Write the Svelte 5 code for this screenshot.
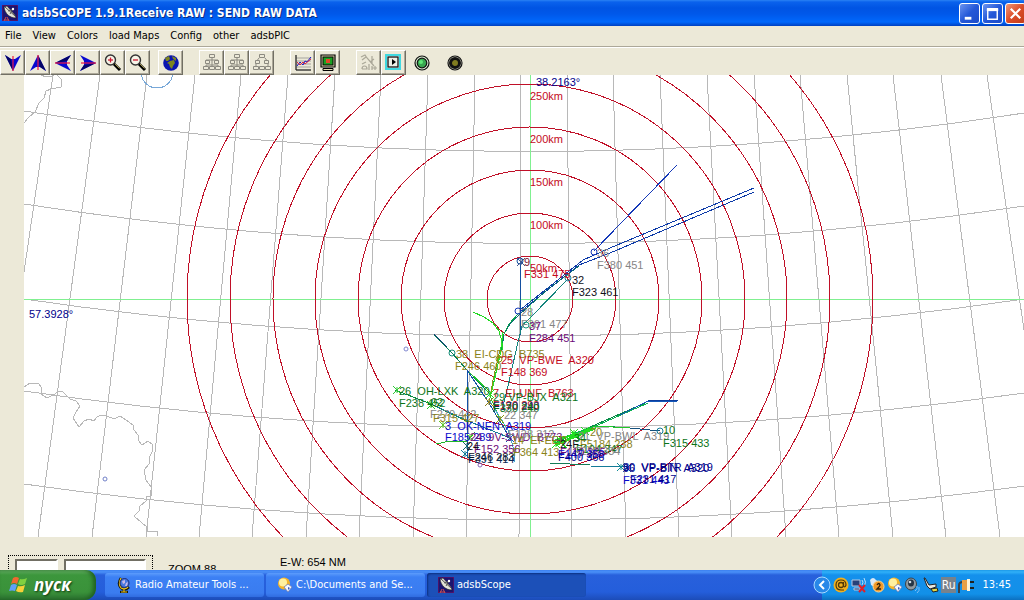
<script>
  const menus = ['File', 'View', 'Colors', 'load Maps', 'Config', 'other', 'adsbPIC'];

  const toolGroups = [
    ['south', 'north', 'west', 'east', 'zoom in', 'zoom out'],
    ['globe'],
    ['tree 1', 'tree 2', 'tree 3'],
    ['chart', 'monitor'],
    ['tools', 'run']
  ];

  const rings = [43, 86, 129, 172, 215, 257, 300, 343];

  // top and bottom x of every meridian
  const meridians = [
    [53, -15], [100, 38], [147, 92], [195, 146], [241, 199], [288, 252], [335, 306],
    [381, 359], [428, 413], [475, 466], [521, 519], [567, 572], [613, 626], [660, 679],
    [707, 732], [754, 786], [800, 839], [847, 893], [893, 946], [941, 1000], [987, 1054]
  ];

  // left y, control y and right y of every parallel
  const parallels = [
    [111, 191, 113], [204, 282, 206], [299, 373, 299], [391, 464, 393], [484, 555, 486]
  ];

  const navy = '#00008b', red = '#c40a1c', olive = '#8a8218', green = '#0c7418';
  const grey = '#858585', purple = '#6c0a78', blue = '#0808cc', black = '#101018', dark = '#0a2a58';

  const tracks = [
    ['#1438b8', '677,165 594,251'],
    ['#0c3aa8', '754,188 610,248 583,260 520,310'],
    ['#0c3aa8', '754,192 610,253 579,265 540,296 520,312'],
    ['#1450a0', '520,261 520,335'],
    ['#0a6a78', '579,266 548,289 520,314 510,324 504,334 502,348'],
    ['#14847c', '568,279 530,318 522,326 518,342 508,386 504,402'],
    ['#20d820', '473,312 484,317 493,323 499,331 502,342 502,350'],
    ['#08a04c', '519,313 509,324 503,336 501,351 497,368 490,398'],
    ['#28e028', '503,332 500,355 494,382 489,402'],
    ['#8c9410', '500,350 493,380 489,404'],
    ['#103c78', '434,334 452,353'],
    ['#088058', '434,335 452,353 467,370 490,394'],
    ['#20c828', '467,370 490,392'],
    ['#1450a8', '467,370 467,458'],
    ['#1450a8', '467,370 489,403 511,440'],
    ['#0c8c40', '395,390 431,404 468,422'],
    ['#147c98', '431,404 468,421 510,438'],
    ['#20b828', '436,444 450,441 467,441 475,432'],
    ['#20c828', '490,396 499,417 506,427'],
    ['#48a8c8', '489,400 508,430 514,450 514,462'],
    ['#088848', '555,443 597,424 645,403'],
    ['#08b050', '553,441 598,425 648,403'],
    ['#1458b8', '620,415 646,402 677,401'],
    ['#0c3c9c', '648,401 678,400'],
    ['#148c58', '599,426 630,428'],
    ['#14507c', '630,428 660,431'],
    ['#20c828', '556,444 595,426 630,428'],
    ['#147c58', '550,463 590,465'],
    ['#147c98', '590,466 625,467']
  ];

  const marks = [
    ['o', 520, 261, '#1450a0'], ['o', 518, 311, '#1438b8'], ['o', 594, 252, '#1438b8'],
    ['o', 568, 278, '#147c98'], ['o', 526, 325, '#14947c'], ['o', 452, 353, '#148c78'],
    ['o', 660, 431, '#147c98'], ['o', 499, 359, '#8c9410'],
    ['x', 397, 390, '#30c838'], ['x', 431, 405, '#20c828'], ['x', 443, 425, '#60c830'],
    ['x', 467, 446, '#14606c'], ['x', 490, 394, '#20e020'], ['x', 489, 402, '#8c7c18'],
    ['x', 556, 444, '#20e020'], ['x', 560, 440, '#20e020'], ['x', 574, 433, '#20e020'],
    ['x', 585, 431, '#20e020'], ['x', 621, 467, '#148c98'], ['x', 627, 468, '#1458b8'],
    ['x', 510, 438, '#1458b8'], ['x', 470, 437, '#60c830'], ['x', 521, 262, '#405890'],
    ['x', 500, 419, '#8c9410'], ['x', 465, 454, '#147c98']
  ];

  const labels = [
    [530, 100, red, '250km'], [530, 143, red, '200km'], [530, 186, red, '150km'],
    [530, 229, red, '100km'], [530, 272, red, '50km'],
    [536, 86, navy, '38.2163°'], [29, 318, navy, '57.3928°'],
    [524, 266, '#7a1030', '9'], [524, 278, red, 'F331 475'],
    [597, 257, grey, '36'], [597, 269, grey, 'F380 451'],
    [572, 284, black, '32'], [572, 296, black, 'F323 461'],
    [521, 316, grey, '28'], [521, 328, grey, 'F361 477'],
    [529, 330, purple, '37'], [529, 342, purple, 'F284 451'],
    [456, 358, olive, '38  EI-CDG  B735'], [455, 370, olive, 'F246 460'],
    [501, 364, red, '25  VP-BWE  A320'], [501, 376, red, 'F148 369'],
    [399, 395, green, '26  OH-LXK  A320'], [399, 407, green, 'F238 452'],
    [431, 406, green, '02'], [430, 418, grey, 'F270 442'], [433, 422, olive, 'F315 427'],
    [493, 397, red, '7  EI-UNF  B763'], [493, 401, green, '29 VP-BJX  A321'],
    [493, 409, red, 'F190 293'], [493, 410, dark, 'F170 240'], [493, 412, green, 'F330 240'],
    [504, 419, grey, '22 347'],
    [445, 430, blue, '3  OK-NEN  A319'], [445, 441, blue, 'F185 289'],
    [470, 441, purple, '24  9V-SWD  B773'], [474, 453, purple, 'F152 356'],
    [508, 438, grey, 'F138 312'], [512, 444, olive, '14  EI-EED'], [513, 456, olive, 'F364 413'],
    [467, 450, black, '24'], [468, 461, black, 'F246 283'], [468, 463, dark, 'F391 414'],
    [590, 436, olive, '20'], [578, 440, grey, '21  VP-BWL  A319'],
    [574, 442, green, '34'], [580, 448, olive, 'F5184 238'],
    [576, 453, green, 'F104 347'], [574, 455, grey, 'F217 334'],
    [560, 448, black, '24F'], [560, 456, purple, 'F110 365'],
    [558, 458, blue, 'F147 358'], [558, 461, navy, 'F400 366'],
    [663, 434, green, '10'], [663, 447, green, 'F315 433'],
    [623, 471, navy, '30  VP-BTR  A319'], [623, 472, navy, '96  VP-BIN  A320'],
    [623, 484, blue, 'F331 443'], [630, 483, navy, 'F231 417']
  ];

  const tasks = [
    { icon: 'globe', text: 'Radio Amateur Tools ...', active: false },
    { icon: 'user', text: 'C:\\Documents and Se...', active: false },
    { icon: 'dish', text: 'adsbScope', active: true }
  ];
</script>

{#snippet dish()}
  <svg class="i16" viewBox="0 0 16 16" aria-hidden="true">
    <rect width="16" height="16" fill="#1c1470" />
    <path d="M0 0H16V16H0Z" fill="none" stroke="#7a1060" />
    <path d="M2 2C3 9 8 13 14 13L13 10L5 1Z" fill="#e4e4d8" stroke="#222" stroke-width=".6" />
    <path d="M3 2L13 11M6 6L11 4M8 9L11 4" stroke="#555" fill="none" />
    <path d="M4 12L2 16M5 12L7 16M2 15H7" stroke="#c85050" fill="none" />
    <circle cx="11" cy="4" r="1.2" fill="#fff" />
  </svg>
{/snippet}

{#snippet userIcon()}
  <svg class="i16" viewBox="0 0 16 16" aria-hidden="true">
    <circle cx="7" cy="6.5" r="6" fill="#f5b428" />
    <circle cx="6" cy="5.5" r="4" fill="#fff0a0" />
    <path d="M7 10L11 7L15 10L11 15Z" fill="#f4f6ff" stroke="#7480b0" stroke-width=".8" />
    <path d="M11 10L13 11L11 13Z" fill="#3858b8" />
  </svg>
{/snippet}

{#snippet tool(name)}
  <svg class="i20" viewBox="0 0 20 20" aria-hidden="true">
    {#if name === 'south' || name === 'north' || name === 'west' || name === 'east'}
      <g transform="rotate({{ south: 0, west: 90, north: 180, east: 270 }[name]} 10 10)">
        <path d="M2 2L8 6H12L18 2L10 18Z" fill="#0808d0" />
        <path d="M2 2L8 6L10 18Z" fill="#040468" />
        <path d="M10 3V18" stroke="#f01840" stroke-width="1.2" />
      </g>
    {:else if name === 'zoom in' || name === 'zoom out'}
      <circle cx="7.500" cy="7" r="5" fill="#f6f4e8" stroke="#333" stroke-width="1.4" />
      <path d="M11 11L17 17" stroke="#000" stroke-width="3" />
      <path d="M12 11L16.500 15.500" stroke="#c8b860" stroke-width=".8" />
      <path d="M5 7H10" stroke="#d01830" stroke-width="1.3" />
      {#if name === 'zoom in'}<path d="M7.500 4.500V9.500" stroke="#d01830" stroke-width="1.3" />{/if}
    {:else if name === 'globe'}
      <circle cx="10" cy="10" r="7.800" fill="#0a14b0" />
      <path d="M4 5L8 3L9 6L7 8L5 8ZM9 8L13 7L14 10L12 13L11 16L9 14L8 11L6 10ZM11 3L15 5L15 8L12 6Z" fill="#7c8420" />
    {:else if name.startsWith('tree')}
      <g fill="#ece9d8" stroke="#8c8a80" stroke-width="1">
        {#if name === 'tree 3'}
          <path d="M7 5L4 9V15M13 5L16 9V15" fill="none" />
        {:else}
          <path d="M10 5V15M4 10V7H16V10M4 15V12H16V15" fill="none" />
        {/if}
        <path d="M7.500 1.500H12.500V4.500H7.500ZM3.500 7.500H7.500V10.500H3.500ZM12.500 7.500H16.500V10.500H12.500ZM1.500 13.500H6.500V16.500H1.500ZM13.500 13.500H18.500V16.500H13.500ZM7.500 13.500H12.500V16.500H7.500Z" />
      </g>
    {:else if name === 'chart'}
      <path d="M3 2V17H18M3 5H18M3 8H18M3 11H18M3 14H18" stroke="#888" stroke-width=".7" fill="none" />
      <path d="M3 2V17H18" stroke="#111" fill="none" />
      <path d="M4 13L7 9L10 12L12 8L14 9L18 4" stroke="#1818c0" stroke-width="1" fill="none" />
      <path d="M4 9L7 12L10 9L12 11L18 6" stroke="#d82048" stroke-width="1" fill="none" />
    {:else if name === 'monitor'}
      <path d="M3 2H17V14H3Z" fill="#d8d0a8" stroke="#000" stroke-width="1.2" />
      <rect x="5" y="4" width="10" height="8" fill="#18a020" stroke="#000" />
      <rect x="8" y="6" width="4" height="4" fill="#e04828" />
      <path d="M5 15.500H15V17.500H5Z" fill="#e0d8b0" stroke="#000" />
    {:else if name === 'tools'}
      <g stroke="#aaa798" fill="none" stroke-width="1.2">
        <path d="M2 4L6 2L8 5L15 13M3 7L7 4M13 3V10M11 9L15 6M3 11L7 9M3 16C3 12 8 12 8 16H3M10 17V11M13 17V13M16 17V13M13 15H18" />
      </g>
    {:else}
      <rect x="2" y="2" width="14" height="14" fill="#fff" stroke="#40d8e0" stroke-width="2" />
      <rect x="4" y="4" width="10" height="10" fill="#f0f0e8" stroke="#111" stroke-width="1.3" />
      <path d="M8 6L12 9L8 12Z" fill="#000" />
    {/if}
  </svg>
{/snippet}

<div class="screen">
  <header class="title">
    {@render dish()}
    <h1>adsbSCOPE 1.9.1Receive RAW : SEND RAW DATA</h1>
    <div class="window-buttons">
      <button aria-label="Minimize"><svg viewBox="0 0 20 20"><path d="M5 15H12" stroke="#fff" stroke-width="3" /></svg></button>
      <button aria-label="Maximize"><svg viewBox="0 0 20 20"><path d="M5 5H15V16H5Z" fill="none" stroke="#fff" stroke-width="1.5" /><path d="M4 6H16" stroke="#fff" stroke-width="3" /></svg></button>
      <button class="close" aria-label="Close"><svg viewBox="0 0 20 20"><path d="M5 5L15 15M15 5L5 15" stroke="#fff" stroke-width="2.300" /></svg></button>
    </div>
  </header>

  <nav class="menu">
    {#each menus as item}<button>{item}</button>{/each}
  </nav>

  <div class="toolbar">
    {#each toolGroups as group}
      <div class="group">
        {#each group as name}
          <button aria-label={name}>{@render tool(name)}</button>
        {/each}
      </div>
    {/each}
    <svg class="i16 lamp" viewBox="0 0 16 16" role="img" aria-label="on">
      <circle cx="8" cy="8" r="7" fill="#dff0d8" stroke="#111" stroke-width="1.2" />
      <circle cx="8" cy="8" r="4.800" fill="#38a850" stroke="#111" stroke-width="1.2" />
      <circle cx="7" cy="7" r="2" fill="#60e878" />
    </svg>
    <svg class="i16 lamp" viewBox="0 0 16 16" role="img" aria-label="off">
      <circle cx="8" cy="8" r="7" fill="#d8d8c8" stroke="#111" stroke-width="1.2" />
      <circle cx="8" cy="8" r="4.500" fill="#807c20" stroke="#111" stroke-width="3" />
    </svg>
  </div>

  <main>
    <svg class="map" viewBox="24 75 1000 462" preserveAspectRatio="xMidYMid slice" role="img" aria-label="Radar map">
      <g class="lines">
        <g stroke="#b8b8b8">
          {#each meridians as [top, bottom]}<path d="M{top} 75L{bottom} 537" />{/each}
          {#each parallels as [left, mid, right]}<path d="M24 {left}Q524 {mid} 1024 {right}" />{/each}
          <path d="M41 75L46 77L52 76L56 74L62 80L61 87L51 89L46 91L44 98L39 103L35 112L28 118L24 123" />
          <path d="M24 387L30 383L38 383L42 388L41 394L47 398L55 394L58 391L63 392L70 399L76 401L80 406L76 412L73 418L79 427L84 421L89 419L94 421L97 417L101 415L107 416L114 419L120 416L126 420L133 425L134 430L138 435L138 440L142 445L148 441L153 445L152 452L149 458L150 463L144 470L146 480L152 488L151 496L146 497L146 501L140 506L139 511L134 516L142 523L147 527L147 531L157 531L157 536" />
        </g>
        <rect x="24" y="299" width="1000" height="1" fill="#80f090" />
        <rect x="530" y="75" width="1" height="462" fill="#80f090" />
        <g stroke="#c01028">
          {#each rings as r}<circle cx="530" cy="299" {r} />{/each}
        </g>
        <circle cx="157" cy="72" r="16" stroke="#78a8d8" />
        {#each tracks as [colour, points]}<polyline {points} stroke={colour} />{/each}
        <path d="M556 445L596 428M554 441L592 429M558 438L566 448M572 432L580 440" stroke="#20e020" stroke-width="2" />
      </g>
      <g class="marks">
        <circle cx="105" cy="479" r="2" stroke="#7080c8" />
        <circle cx="406" cy="349" r="2" stroke="#8088d0" />
        <circle cx="480" cy="465" r="2" stroke="#8868b8" />
        {#each marks as [kind, x, y, colour]}
          {#if kind === 'o'}
            <circle cx={x} cy={y} r="3" stroke={colour} />
          {:else}
            <path d="M{x - 4} {y - 4}L{x + 4} {y + 4}M{x + 4} {y - 4}L{x - 4} {y + 4}M{x} {y - 3}V{y + 3}" stroke={colour} />
          {/if}
        {/each}
      </g>
      {#each labels as [x, y, colour, text]}<text {x} {y} fill={colour}>{text}</text>{/each}
    </svg>
  </main>

  <section class="status">
    <div class="panel"><span class="short"></span><span class="long"></span></div>
    <span class="zoom">ZOOM 88</span>
    <span class="scale">E-W: 654 NM</span>
  </section>

  <footer class="taskbar">
    <button class="start">
      <svg viewBox="0 0 20 20" aria-hidden="true">
        <path d="M4 3Q7 1 10 3L8 9Q5 7 2 9Z" fill="#f06830" />
        <path d="M11 4Q14 5 18 3L16 9Q12 11 9 9Z" fill="#80d040" />
        <path d="M2 10Q5 8 8 10L6 16Q3 15 0 16Z" fill="#60a0f8" />
        <path d="M9 11Q12 12 16 10L14 17Q10 18 7 16Z" fill="#f8d038" />
      </svg>
      пуск
    </button>
    <div class="tasks">
      {#each tasks as task}
        <button class:active={task.active}>
          {#if task.icon === 'dish'}
            {@render dish()}
          {:else if task.icon === 'user'}
            {@render userIcon()}
          {:else}
            <svg class="i16" viewBox="0 0 16 16" aria-hidden="true">
              <path d="M5 1Q1 7 5 11Q9 14 13 10M8 12V15M4 15H12" fill="none" stroke="#181808" stroke-width="2.500" />
              <path d="M5 1Q2 7 5 11Q9 13 12 10M8 12V15M5 15H11" fill="none" stroke="#e8c020" stroke-width="1.200" />
              <circle cx="8.500" cy="6" r="4.500" fill="#4878e0" stroke="#181858" stroke-width=".8" />
              <path d="M6 4L9 3L9 6L7 7ZM10 6L12 5L11 9L9 9Z" fill="#c8b8e8" />
            </svg>
          {/if}
          <span>{task.text}</span>
        </button>
      {/each}
    </div>
    <div class="tray">
      <button class="expand" aria-label="Show hidden icons"><svg viewBox="0 0 18 18"><circle cx="9" cy="9" r="8" fill="#2888e8" stroke="#a8d8ff" /><path d="M11 5L7 9L11 13" fill="none" stroke="#fff" stroke-width="2" /></svg></button>
      <svg class="i16" viewBox="0 0 16 16" aria-hidden="true"><circle cx="8" cy="8" r="7.500" fill="#f0b020" /><circle cx="8" cy="8" r="2.500" fill="none" stroke="#503808" stroke-width="1.300" /><path d="M10.500 5V9Q12 11 13 8Q13 3 8 3Q3 3 3 8Q3 13 8 13H11" fill="none" stroke="#503808" stroke-width="1.200" /></svg>
      <svg class="i16" viewBox="0 0 16 16" aria-hidden="true"><path d="M1 3H9V9H1ZM3 11H9V13H3Z" fill="#284078" stroke="#b8c8e0" /><path d="M11 3Q13 5 11 8M13 1Q16 5 13 10" fill="none" stroke="#b8e0f8" /><path d="M8 8L14 15M14 8L8 15" stroke="#e02028" stroke-width="2" /></svg>
      <svg class="i16" viewBox="0 0 16 16" aria-hidden="true"><path d="M1 3Q4 -1 7 3L11 6L7 11L2 8Z" fill="#dce8f4" /><circle cx="9.500" cy="9.500" r="5.500" fill="#f09828" stroke="#f8d898" /><path d="M8 8Q10 5 11 8Q11 9 8 12H12" fill="none" stroke="#302008" stroke-width="1.300" /></svg>
      {@render userIcon()}
      <svg class="i16" viewBox="0 0 16 16" aria-hidden="true"><ellipse cx="6" cy="7" rx="5.500" ry="6" fill="#909aa0" stroke="#38444c" /><ellipse cx="6" cy="6" rx="3" ry="3.500" fill="#243444" /><circle cx="5" cy="5" r="1.300" fill="#d0dce4" /><path d="M12 9Q13 12 10 14M14 10Q15 14 12 16" fill="none" stroke="#80c0f8" /></svg>
      <svg class="i16" viewBox="0 0 16 16" aria-hidden="true"><path d="M1 1L4 9L7 12L13 10L13 7L6 8L2 1Z" fill="#e8e8e0" stroke="#222" /><path d="M8 12L14 11L15 14L10 15Z" fill="#e8d840" stroke="#222" /></svg>
      <span class="lang">Ru</span>
      <svg class="i16" viewBox="0 0 16 16" aria-hidden="true"><path d="M1 16V8Q1 5 5 5" fill="none" stroke="#384048" stroke-width="2" /><path d="M4 3H9V13H4Z" fill="#e8a048" /><path d="M9 2H12V14H9Z" fill="#fff4d8" /><path d="M12 5H16M12 11H16" stroke="#202020" stroke-width="2" /></svg>
      <time>13:45</time>
    </div>
  </footer>
</div>

<style>
  :global(body) {
    margin: 0;
  }
  .screen {
    display: flex;
    flex-direction: column;
    height: 100vh;
    overflow: hidden;
    background: #ece9d8;
    color: #000;
    font: 11px/14px "DejaVu Sans Condensed", "DejaVu Sans", sans-serif;
  }
  button {
    margin: 0;
    padding: 0;
    border: 0;
    background: none;
    color: inherit;
    font: inherit;
  }
  svg {
    display: block;
    flex: none;
  }
  .i16 {
    width: 16px;
    height: 16px;
  }
  .i20 {
    width: 20px;
    height: 20px;
  }
  .title {
    display: flex;
    align-items: center;
    gap: 4px;
    flex: none;
    height: 26px;
    padding-left: 2px;
    background: linear-gradient(#2a82f4 0, #0a62ec 2px, #0054e3 8px, #0058ea 14px, #0068fc 22px, #0040c0 26px);
    color: #fff;
  }
  h1 {
    flex: 1;
    margin: 0;
    font: bold 12px/18px "DejaVu Sans Condensed", "DejaVu Sans", sans-serif;
    text-shadow: 1px 1px #0a2c80;
    white-space: nowrap;
  }
  .window-buttons {
    display: flex;
    gap: 2px;
  }
  .window-buttons button {
    box-sizing: border-box;
    width: 21px;
    height: 21px;
    border: 1px solid #fff;
    border-radius: 3px;
    background: linear-gradient(135deg, #6c94f0, #2458d8 50%, #1c4cc8);
  }
  .window-buttons svg {
    width: 19px;
    height: 19px;
  }
  .window-buttons .close {
    margin-right: -2px;
    background: linear-gradient(135deg, #f09878, #dc4c28 50%, #c03c18);
  }
  .menu {
    display: flex;
    gap: 11px;
    flex: none;
    height: 20px;
    padding: 0 5px;
    border-bottom: 1px solid #aca899;
  }
  .toolbar {
    display: flex;
    align-items: flex-end;
    flex: none;
    height: 27px;
    border-top: 1px solid #fff;
  }
  .group {
    display: flex;
    margin-right: 16px;
  }
  .group:first-child {
    margin-right: 8px;
  }
  .group button {
    display: grid;
    place-items: center;
    box-sizing: border-box;
    width: 25px;
    height: 25px;
    border: 1px solid;
    border-color: #fff #716f64 #716f64 #fff;
    box-shadow: inset -1px -1px #aca899;
  }
  .lamp {
    margin: 0 17px 4px 0;
  }
  .group + .lamp {
    margin-left: -8px;
  }
  main {
    flex: 1;
    min-height: 0;
    margin-left: 24px;
    background: #fff;
  }
  .map {
    width: 100%;
    height: 100%;
  }
  .lines {
    fill: none;
    shape-rendering: crispEdges;
  }
  .marks {
    fill: none;
  }
  text {
    font: 11px "Liberation Sans", sans-serif;
    white-space: pre;
  }
  .status {
    display: flex;
    align-items: flex-start;
    flex: none;
    box-sizing: border-box;
    height: 33px;
    padding: 18px 8px 0;
    overflow: hidden;
    font: 11px/14px "Liberation Sans", sans-serif;
  }
  .panel {
    display: flex;
    gap: 6px;
    box-sizing: border-box;
    width: 145px;
    height: 24px;
    padding: 3px 6px;
    border: 1px dotted #000;
  }
  .panel span {
    height: 20px;
    border: 2px solid #716f64;
    border-right-color: #fff;
    background: #fff;
  }
  .short {
    flex: 1;
  }
  .long {
    flex: 2;
  }
  .zoom {
    width: 112px;
    margin: 7px 0 0 15px;
  }
  .taskbar {
    display: flex;
    flex: none;
    height: 30px;
    background: linear-gradient(#3c80f0 0, #4a90f8 2px, #2860dc 5px, #245edb 22px, #1c4cb8 30px);
    color: #fff;
  }
  .start {
    display: flex;
    align-items: center;
    gap: 5px;
    width: 96px;
    padding-left: 9px;
    border-radius: 0 10px 12px 0;
    background: linear-gradient(#6cb86c 0, #3c963c 5px, #3a923a 22px, #2a7030 30px);
    box-shadow: inset -3px 0 4px #206020;
    font: italic bold 17px/20px "Open Sans", sans-serif;
    text-shadow: 1px 1px 2px #103810;
  }
  .start svg {
    width: 20px;
    height: 20px;
  }
  .tasks {
    display: flex;
    flex: 1;
    gap: 2px;
    min-width: 0;
    padding: 3px 0 3px 9px;
  }
  .tasks button {
    display: flex;
    align-items: center;
    gap: 3px;
    flex: 0 1 159px;
    box-sizing: border-box;
    min-width: 0;
    padding-left: 11px;
    border-radius: 3px;
    background: linear-gradient(#5c9cfc, #3c80f4 4px, #3a7cf0 20px, #306ce0);
    white-space: nowrap;
    overflow: hidden;
  }
  .tasks .active {
    background: #1c50b8;
    box-shadow: inset 1px 1px 2px #0c3080;
  }
  .tray {
    display: flex;
    align-items: center;
    gap: 2px;
    padding-right: 13px;
    background: linear-gradient(#1c98e8 0, #30b0f8 2px, #1490ec 5px, #1290e8 24px, #0c70c0 30px);
  }
  .expand {
    margin-left: -9px;
  }
  .expand svg {
    width: 18px;
    height: 18px;
  }
  .lang {
    padding: 1px 1px;
    background: #78828c;
    font-size: 12px;
  }
  time {
    margin-left: 6px;
  }
</style>
